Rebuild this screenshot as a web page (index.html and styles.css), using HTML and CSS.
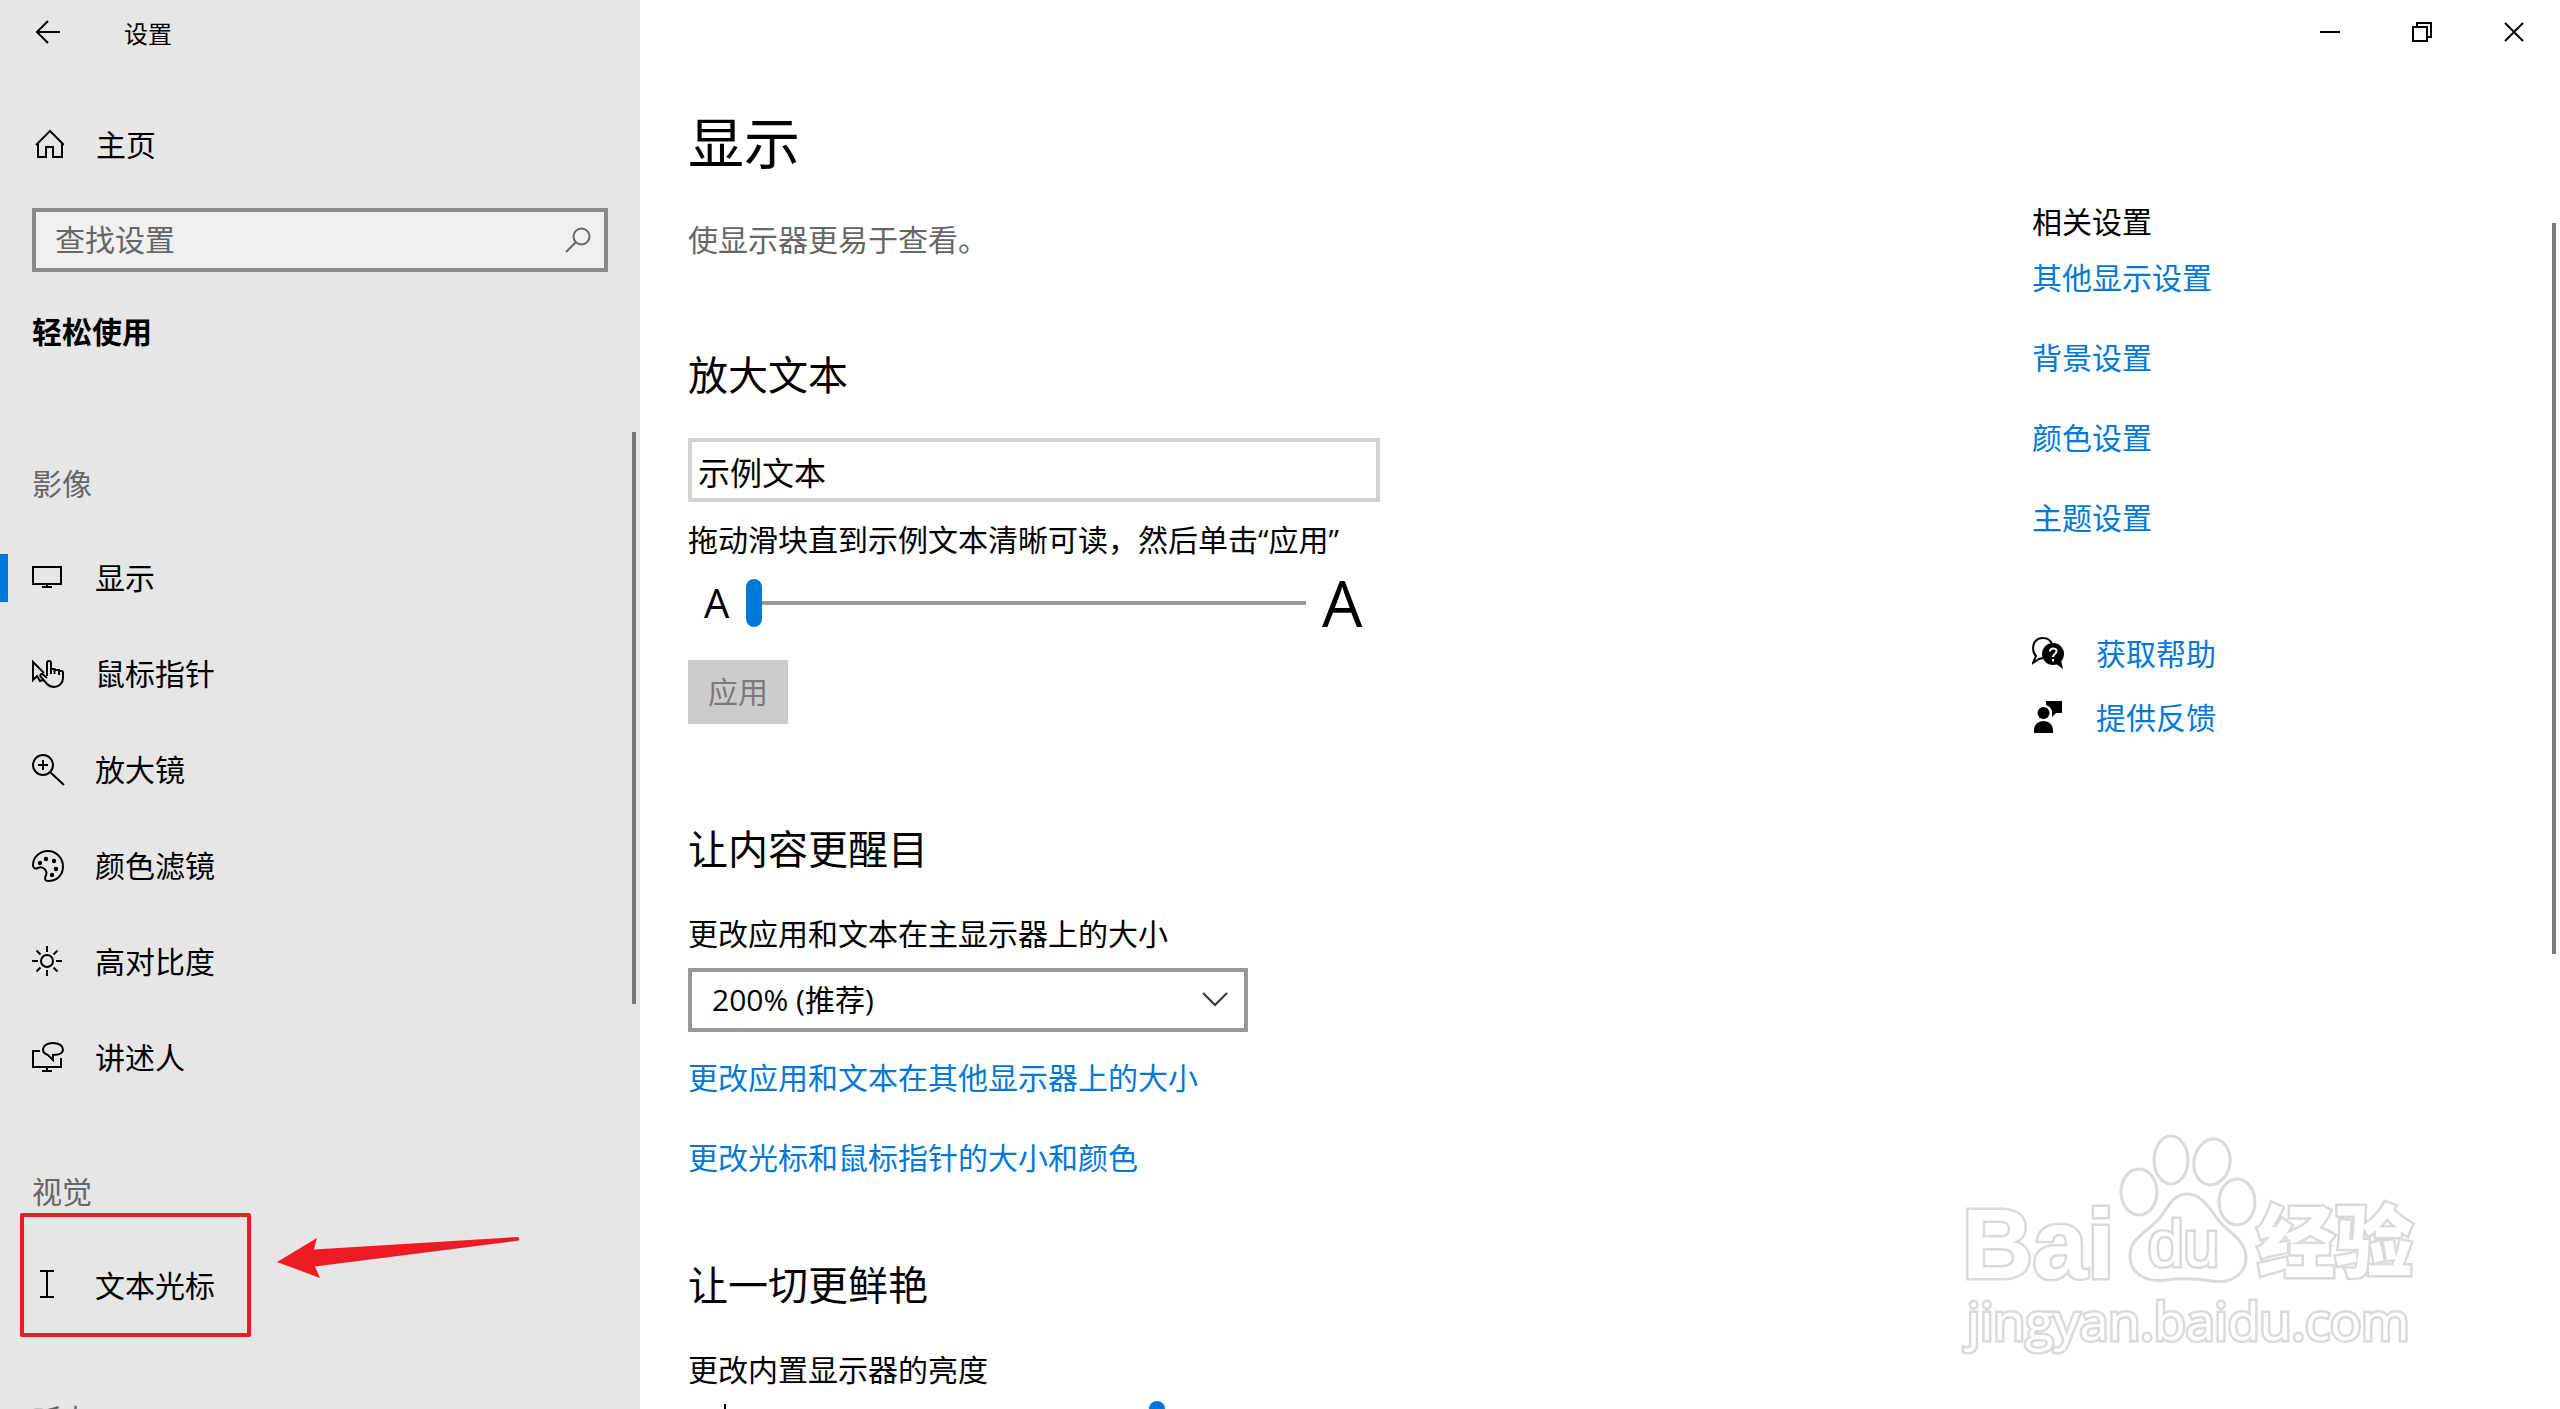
FILE: index.html
```html
<!DOCTYPE html>
<html lang="zh-CN">
<head>
  <meta charset="utf-8">
  <meta name="viewport" content="width=device-width, initial-scale=1">
  <title>设置</title>
  <link rel="stylesheet" href="styles.css">
</head>
<body>
<div class="app">
  <div class="sidebar">
    <header class="sidebar-title">
      <button class="back" type="button" aria-label="返回">
        <svg width="24" height="24" viewBox="0 0 24 24" class="line"><path d="M24 12H1M12 1L1 12l11 11"/></svg>
      </button>
      <span>设置</span>
    </header>
    <a class="home" href="#">
      <svg width="32" height="32" viewBox="0 0 32 32" class="line"><path d="M4 16L18 2l14 14M6 14v14h8V18h7v10h9V14"/></svg>
      <span>主页</span>
    </a>
    <div class="search">
      <input type="text" placeholder="查找设置" aria-label="查找设置">
      <button type="button" aria-label="搜索">
        <svg width="26" height="26" viewBox="0 0 26 26"><circle cx="16.500" cy="9.500" r="8"/><path d="M10.500 15.500L1 25"/></svg>
      </button>
    </div>
    <h2 class="category">轻松使用</h2>
    <nav class="nav">
      <h3>影像</h3>
      <ul>
        <li><a class="current" href="#" aria-current="page">
          <svg width="32" height="32" viewBox="0 0 32 32" class="line"><path d="M1 5h28v17H1zM15 22v3M10 25h10"/></svg>
          <span>显示</span></a></li>
        <li><a href="#">
          <svg width="32" height="32" viewBox="0 0 32 32" class="line"><path d="M12 15L1 4v18l4-4 3 5 3-1M15 18V5a2 2 0 0 1 4 0V16M19 11h3.500v5M23 12h4v5M27 13h2.500a1.500 1.500 0 0 1 1.500 1.500V20c0 5-4 9-9 9-3 0-5-1-7-3l-6.500-7.500c-1-2 1-3 2.500-2l4 3.500"/></svg>
          <span>鼠标指针</span></a></li>
        <li><a href="#">
          <svg width="34" height="34" viewBox="0 0 34 34" class="line"><circle cx="11" cy="12" r="10"/><path d="M11 7v10M6 12h10M18 19l14 13"/></svg>
          <span>放大镜</span></a></li>
        <li><a href="#">
          <svg width="34" height="34" viewBox="0 0 34 34" class="line"><path d="M1 16C1 8 8 2 16 2s15 7 15 15.500S25 32 16 32c-3 0-3.500-2-2.500-4.500 1.500-3 1.500-5-.5-7-2-2.500-4-3-7-1.500-3 1.500-5 0-5-3z"/><g class="dots"><circle cx="8" cy="14" r="2.200"/><circle cx="14" cy="10" r="2.200"/><circle cx="22" cy="12" r="2.200"/><circle cx="24" cy="20" r="2.200"/><circle cx="20" cy="26" r="2.200"/></g></svg>
          <span>颜色滤镜</span></a></li>
        <li><a href="#">
          <svg width="32" height="32" viewBox="0 0 32 32" class="line"><circle cx="15" cy="15" r="6"/><path d="M15 0v6M15 24v6M0 15h6M24 15h6M4.500 4.500l4 4M21.500 21.500l4 4M4.500 25.500l4-4M21.500 8.500l4-4"/></svg>
          <span>高对比度</span></a></li>
        <li><a href="#">
          <svg width="34" height="34" viewBox="0 0 34 34" class="line"><path d="M8 10H1v16h28v-9M15 26v4M10 30h10"/><path d="M21 19l-5-5c-3-1-5-3-5-5.500C11 5 15 2 21 2s10 3 10 6.500S27 14 21 14z"/></svg>
          <span>讲述人</span></a></li>
      </ul>
      <h3>视觉</h3>
      <ul>
        <li><a href="#">
          <svg width="32" height="32" viewBox="0 0 32 32" class="line"><path d="M8 1h14M8 27h14M15 1v26"/></svg>
          <span>文本光标</span></a>
          <div class="marker">
            <svg width="244" height="44" viewBox="0 0 244 44"><path d="M1 26L41 2l-3 11.500L242 1q2 1.500 1 3.500L39 30.500 44 42z"/></svg>
          </div>
        </li>
      </ul>
      <h3>听力</h3>
    </nav>
    <div class="scroll-thumb"></div>
  </div>

  <div class="page">
    <div class="window-buttons">
      <button type="button" aria-label="最小化"><svg width="20" height="20" viewBox="0 0 20 20"><path d="M0 10h20"/></svg></button>
      <button type="button" aria-label="还原"><svg width="20" height="20" viewBox="0 0 20 20"><path d="M1 5h14v14H1zM5 5V1h14v14h-4"/></svg></button>
      <button type="button" aria-label="关闭"><svg width="20" height="20" viewBox="0 0 20 20"><path d="M1 1l18 18M19 1L1 19"/></svg></button>
    </div>
    <div class="columns">
      <main class="content">
        <h1>显示</h1>
        <p class="intro">使显示器更易于查看。</p>

        <section class="first">
          <h2>放大文本</h2>
          <input class="sample" type="text" value="示例文本" aria-label="示例文本" readonly>
          <label class="slider-label" for="text-size">拖动滑块直到示例文本清晰可读，然后单击“应用”</label>
          <div class="slider">
            <span class="small-a">A</span>
            <input id="text-size" type="range" min="100" max="225" value="100">
            <span class="large-a">A</span>
          </div>
          <button class="apply" type="button" disabled>应用</button>
        </section>

        <section>
          <h2>让内容更醒目</h2>
          <label for="scale">更改应用和文本在主显示器上的大小</label>
          <div class="select">
            <select id="scale"><option>200% (推荐)</option></select>
            <svg width="26" height="16" viewBox="0 0 26 16"><path d="M1 1l12 12L25 1"/></svg>
          </div>
          <div class="links">
            <a href="#">更改应用和文本在其他显示器上的大小</a>
            <a href="#">更改光标和鼠标指针的大小和颜色</a>
          </div>
        </section>

        <section class="vivid">
          <h2>让一切更鲜艳</h2>
          <label for="brightness">更改内置显示器的亮度</label>
          <div class="slider brightness">
            <span class="small-a"><svg width="42" height="42" viewBox="0 0 42 42" class="line"><circle cx="21" cy="21" r="8"/><path d="M21 0v8M21 34v8M0 21h8M34 21h8M7 7l5 5M30 30l5 5M7 35l5-5M30 12l5-5"/></svg></span>
            <input id="brightness" type="range" min="0" max="100" value="74">
          </div>
        </section>
      </main>

      <aside class="related">
        <h2>相关设置</h2>
        <div class="links">
          <a href="#">其他显示设置</a>
          <a href="#">背景设置</a>
          <a href="#">颜色设置</a>
          <a href="#">主题设置</a>
        </div>
        <div class="support">
          <a href="#">
            <svg width="32" height="34" viewBox="0 0 32 34"><path class="hollow" d="M20 8C18 3 15 2 11 2 5 2 1 6 1 12c0 4 1 6 3 8l-3 7 6-4 4-1"/><circle cx="21" cy="18" r="11"/><path d="M23 27l8 6-2-9z"/><path class="mark" d="M18 15.500c0-4 6.500-4 6.500-.5 0 3-3.500 3-3.500 6M21 23v2.500"/></svg>
            <span>获取帮助</span></a>
          <a href="#">
            <svg width="32" height="34" viewBox="0 0 32 34"><circle cx="11.500" cy="13" r="6"/><path d="M2 33v-3c0-5 4-9 9.500-9s9.500 4 9.500 9v3zM14 1h16v12h-6l-4 4v-6c-1-3-3-5-6-6z"/></svg>
            <span>提供反馈</span></a>
        </div>
      </aside>
    </div>
    <div class="scroll-thumb"></div>
    <svg class="watermark" width="520" height="270" viewBox="0 0 520 270" aria-hidden="true">
      <text class="brand" x="22" y="168">Bai</text>
      <ellipse cx="199" cy="82" rx="18" ry="23"/>
      <ellipse cx="231" cy="50" rx="17" ry="24"/>
      <ellipse cx="272" cy="52" rx="18" ry="23" transform="rotate(10 272 52)"/>
      <ellipse cx="297" cy="92" rx="18" ry="23"/>
      <path d="M247 84c15 0 22 14 33 28 10 12 26 18 26 36 0 16-15 26-34 23-18-3-32-3-46-1-22 3-36-8-36-24 0-17 14-22 28-36 9-10 14-26 29-26z"/>
      <text class="du" x="208" y="156">du</text>
      <text class="cjk" x="317" y="161">经验</text>
      <text class="address" x="27" y="230">jingyan.baidu.com</text>
    </svg>
  </div>
</div>
</body>
</html>
```
FILE: styles.css
```css
* {
  box-sizing: border-box;
}

body {
  margin: 0;
  background: #fff;
  color: #000;
  font: 30px/44px "Open Sans", "Noto Sans CJK SC", sans-serif;
}

h1, h2, h3, p, ul {
  margin: 0;
  padding: 0;
  font-weight: 400;
}

ul {
  list-style: none;
}

a {
  color: #0078d7;
  text-decoration: none;
}

button, input, select {
  margin: 0;
  padding: 0;
  border: 0;
  border-radius: 0;
  background: none;
  color: inherit;
  font: inherit;
}

svg {
  display: block;
  flex: none;
}

.line {
  fill: none;
  stroke: #000;
  stroke-width: 2;
}

.app {
  display: grid;
  grid-template-columns: 640px minmax(0, 1fr);
  height: 100vh;
  overflow: hidden;
}

/* Sidebar */

.sidebar {
  position: relative;
  display: flex;
  flex-direction: column;
  min-height: 0;
  overflow: hidden;
  background: #e6e6e6;
}

.sidebar-title {
  display: flex;
  align-items: center;
  height: 64px;
  font-size: 24px;
}

.sidebar-title span {
  padding-top: 4px;
}

.back {
  display: grid;
  place-items: center;
  width: 96px;
  height: 64px;
  margin-right: 28px;
}

.home {
  display: flex;
  align-items: center;
  gap: 32px;
  margin: 59px 32px 0;
  color: #000;
}

.search {
  display: flex;
  flex: none;
  height: 64px;
  margin: 41px 32px 0;
  border: 4px solid #8a8a8a;
  background: #f0f0f0;
}

.search input {
  flex: 1;
  min-width: 0;
  padding-left: 19px;
}

.search input::placeholder {
  color: #666;
  opacity: 1;
}

.search button {
  display: grid;
  place-items: center;
  width: 52px;
}

.search svg {
  fill: none;
  stroke: #666;
  stroke-width: 2;
}

.category {
  margin: 38px 32px 44px;
  font-size: 30px;
  font-weight: 700;
}

.nav {
  flex: 1;
  min-height: 0;
  overflow: hidden;
}

.nav h3 {
  padding: 64px 32px 24px;
  color: #666;
  font-size: 30px;
}

.nav li {
  position: relative;
}

.nav a {
  display: grid;
  grid-template-columns: 63px 1fr;
  align-items: center;
  height: 96px;
  padding-left: 32px;
  color: #000;
}

.nav .current::before {
  content: "";
  position: absolute;
  top: 24px;
  left: 0;
  width: 8px;
  height: 48px;
  background: #0078d7;
}

.dots {
  fill: #000;
  stroke: none;
}

/* Red annotation over the text cursor entry */
.marker {
  position: absolute;
  top: -25px;
  left: 20px;
  width: 231px;
  height: 124px;
  border: 4px solid #ed1c24;
  border-radius: 2px;
  pointer-events: none;
}

.marker svg {
  position: absolute;
  top: 19px;
  left: 252px;
  fill: #ed1c24;
}

.scroll-thumb {
  position: absolute;
  right: 4px;
  width: 4px;
  background: #7a7a7a;
}

.sidebar .scroll-thumb {
  top: 432px;
  height: 572px;
}

.page > .scroll-thumb {
  top: 223px;
  height: 731px;
}

/* Page */

.page {
  position: relative;
  min-height: 0;
  overflow: hidden;
}

.window-buttons {
  display: flex;
  justify-content: flex-end;
  height: 64px;
}

.window-buttons button {
  display: grid;
  place-items: center;
  width: 92px;
}

.window-buttons svg {
  fill: none;
  stroke: #000;
  stroke-width: 2;
}

.columns {
  display: grid;
  grid-template-columns: minmax(0, 1fr) 528px;
}

.content {
  padding: 42px 48px 0;
}

h1 {
  font-size: 56px;
  line-height: 72px;
}

.intro {
  margin-top: 40px;
  color: #666;
}

section {
  margin-top: 98px;
}

.first {
  margin-top: 86px;
}

.vivid {
  margin-top: 78px;
}

section h2 {
  margin-bottom: 36px;
  font-size: 40px;
  line-height: 54px;
}

label {
  display: block;
}

.sample {
  display: block;
  width: 100%;
  max-width: 692px;
  height: 64px;
  padding: 2px 6px 0;
  border: 4px solid #d2d2d2;
  font-size: 32px;
}

.slider-label {
  margin: 16px 0;
}

.slider {
  display: flex;
  align-items: center;
  gap: 16px;
  max-width: 692px;
  height: 50px;
  padding-left: 16px;
}

.small-a {
  width: 26px;
  font-size: 40px;
}

.large-a {
  font-size: 64px;
}

.brightness {
  gap: 0;
  margin-top: 8px;
}

.brightness .small-a {
  width: 42px;
}

.slider input {
  width: 560px;
  height: 48px;
  appearance: none;
}

.slider input::-webkit-slider-runnable-track {
  height: 4px;
  background: #999;
}

.slider input::-webkit-slider-thumb {
  width: 16px;
  height: 48px;
  margin-top: -22px;
  border-radius: 8px;
  background: #0078d7;
  appearance: none;
}

.apply {
  display: block;
  width: 100px;
  height: 64px;
  margin-top: 32px;
  background: #ccc;
  color: #7a7a7a;
}

.select {
  display: grid;
  align-items: center;
  max-width: 560px;
  margin-top: 12px;
}

.select select {
  grid-area: 1 / 1;
  height: 64px;
  padding: 0 20px;
  border: 4px solid #999;
  appearance: none;
}

.select svg {
  grid-area: 1 / 1;
  justify-self: end;
  margin-right: 20px;
  fill: none;
  stroke: #333;
  stroke-width: 2;
  pointer-events: none;
}

.links {
  display: flex;
  flex-direction: column;
  align-items: flex-start;
  gap: 36px;
  margin-top: 24px;
}

/* Related settings */

.related {
  padding-top: 136px;
}

.related h2 {
  font-size: 30px;
}

.related .links {
  margin-top: 12px;
}

.support {
  display: flex;
  flex-direction: column;
  gap: 20px;
  margin-top: 92px;
}

.support a {
  display: flex;
  align-items: center;
  gap: 32px;
}

.support svg {
  margin-bottom: 2px;
}

.hollow {
  fill: none;
  stroke: #000;
  stroke-width: 2;
}

.mark {
  fill: none;
  stroke: #fff;
  stroke-width: 2;
}

.watermark {
  position: absolute;
  right: 100px;
  bottom: 29px;
  fill: #fff;
  stroke: #dadada;
  stroke-width: 3;
  pointer-events: none;
}

.watermark text {
  paint-order: stroke;
  stroke-width: 5;
}

.brand {
  font: 700 98px "Liberation Sans", sans-serif;
}

.du {
  font: 400 64px "Liberation Sans", sans-serif;
}

.cjk {
  font: 900 78px "Noto Sans CJK SC", sans-serif;
}

.address {
  font: 400 52px "Open Sans", sans-serif;
}
```
